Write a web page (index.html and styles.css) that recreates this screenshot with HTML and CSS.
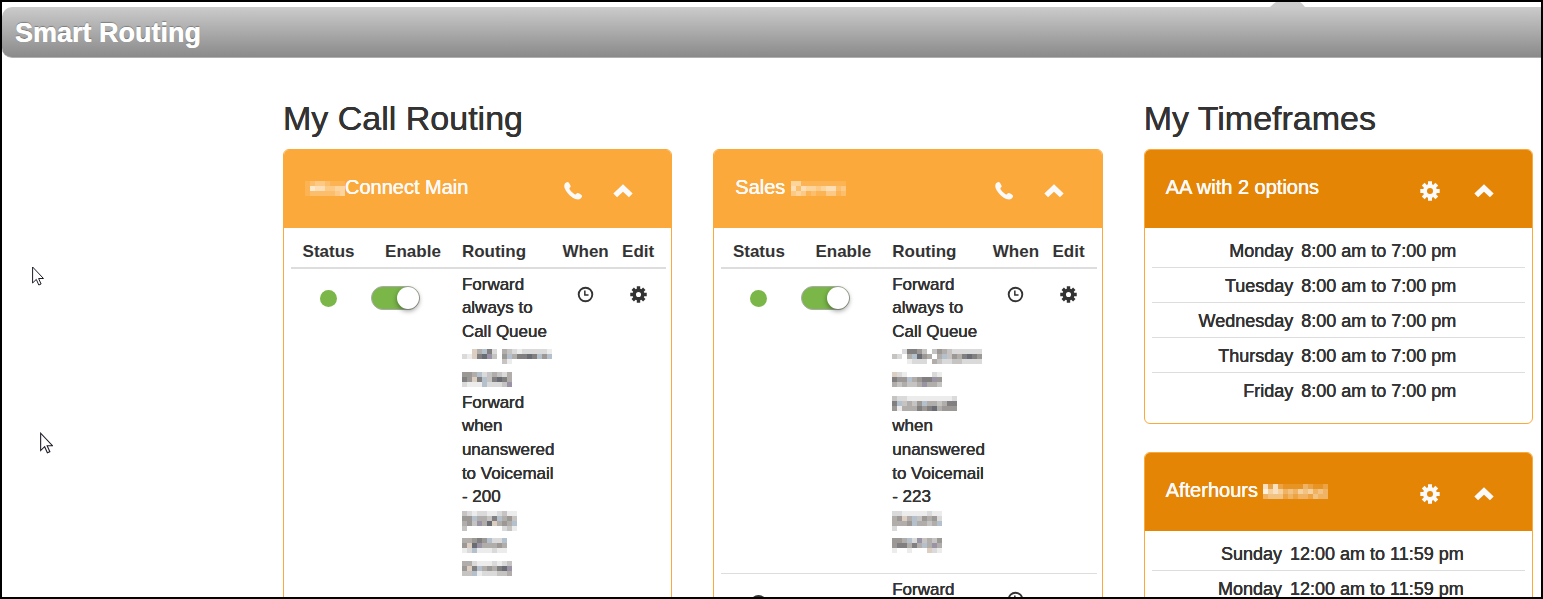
FILE: index.html
```html
<!DOCTYPE html>
<html lang="en">
<head>
<meta charset="utf-8">
<title>Smart Routing</title>
<link rel="stylesheet" href="styles.css">
</head>
<body>
<svg class="defs" aria-hidden="true">
  <symbol id="i-gear" viewBox="0 0 20 20">
    <circle cx="10" cy="10" r="5" fill="none" stroke="currentColor" stroke-width="4"/>
    <g stroke="currentColor" stroke-width="4">
      <path d="M10 .3V4M10 16v3.7M.3 10H4M16 10h3.7M3.2 3.2l2.6 2.6M14.2 14.2l2.6 2.6M3.2 16.800l2.600-2.600M14.200 5.800l2.600-2.600"/>
    </g>
  </symbol>
  <symbol id="i-up" viewBox="0 0 20 20">
    <path d="M2.200 14.400 10 7l7.800 7.400" fill="none" stroke="currentColor" stroke-width="5.400"/>
  </symbol>
  <symbol id="i-phone" viewBox="0 0 20 20">
    <path d="M1.600 3.200C2 2 3.800.9 5 1.100c.8.200 2.800 3.500 2.700 4.500-.1.800-1.500 1.400-1.300 2.100.5 1.700 4 5.200 5.900 5.700.8.200 1.300-1.300 2.200-1.400 1 0 4.400 1.800 4.600 2.800.2 1.100-1.300 3.100-2.700 3.500-1.700.5-5-.4-7-1.800C5.900 13.900 2.700 10.200 1.600 6.900c-.4-1.200-.4-2.700 0-3.700z" fill="currentColor"/>
  </symbol>
  <symbol id="i-clock" viewBox="0 0 18 18">
    <circle cx="9" cy="9" r="7.200" fill="none" stroke="currentColor" stroke-width="2"/>
    <path d="M8.300 4.800v4.800h3.900" fill="none" stroke="currentColor" stroke-width="1.600"/>
  </symbol>
  <symbol id="i-cursor" viewBox="0 0 12 20">
    <path d="M.6 1v16l3.700-3.600 2.500 5.600 2.300-1-2.500-5.500h4.900z" fill="#fff" stroke="#1c1c28" stroke-width="1"/>
  </symbol>
</svg>
<div class="frame">
  <div class="tab-strip">
    <svg class="tab" viewBox="0 0 35 5" aria-hidden="true"><path d="M0 5Q3 2 6 0h24q3 2 5 5z" fill="#ccc"/></svg>
  </div>
  <header class="titlebar"><h1>Smart Routing</h1></header>

  <main class="columns">
    <section class="routing">
      <h2>My Call Routing</h2>
      <div class="pair">
        <article class="panel">
          <div class="panel-head">
            <h3><span class="mosaic light" data-cells="12332111/16553344/12222234"></span>Connect Main</h3>
            <div class="tools">
              <button type="button" aria-label="Call"><svg><use href="#i-phone"/></svg></button>
              <button type="button" aria-label="Collapse"><svg><use href="#i-up"/></svg></button>
            </div>
          </div>
          <div class="panel-body">
            <table class="rules">
              <thead><tr><th class="c-status">Status</th><th class="c-enable">Enable</th><th class="c-routing">Routing</th><th class="c-when">When</th><th class="c-edit">Edit</th></tr></thead>
              <tbody>
                <tr>
                  <td><span class="dot"></span></td>
                  <td><input class="switch" type="checkbox" checked aria-label="Enable rule"></td>
                  <td class="text">Forward<br>always to<br>Call Queue<br><span class="mosaic" data-cells="..t4b62.4321222221/21t67p3.5b46676b5b/........31........"></span><br><span class="mosaic" data-cells="554b234324/65t6b36764/2111b2223p"></span><br>Forward<br>when<br>unanswered<br>to Voicemail<br>- 200<br><span class="mosaic" data-cells="32122112311/55b4436b453/453p47t454b/3.......231"></span><br><span class="mosaic" data-cells="44565b22b/5t7p44454/12b111211"></span><br><span class="mosaic" data-cells="4421112123/5t6b45467p/33b1222334"></span></td>
                  <td><button type="button" class="mini" aria-label="When"><svg><use href="#i-clock"/></svg></button></td>
                  <td><button type="button" class="mini" aria-label="Edit"><svg><use href="#i-gear"/></svg></button></td>
                </tr>
              </tbody>
            </table>
          </div>
        </article>

        <article class="panel">
          <div class="panel-head">
            <h3>Sales <span class="mosaic light" data-cells="44111111111/52544345523/34312113312"></span></h3>
            <div class="tools">
              <button type="button" aria-label="Call"><svg><use href="#i-phone"/></svg></button>
              <button type="button" aria-label="Collapse"><svg><use href="#i-up"/></svg></button>
            </div>
          </div>
          <div class="panel-body">
            <table class="rules">
              <thead><tr><th class="c-status">Status</th><th class="c-enable">Enable</th><th class="c-routing">Routing</th><th class="c-when">When</th><th class="c-edit">Edit</th></tr></thead>
              <tbody>
                <tr>
                  <td><span class="dot"></span></td>
                  <td><input class="switch" type="checkbox" checked aria-label="Enable rule"></td>
                  <td class="text">Forward<br>always to<br>Call Queue<br><span class="mosaic" data-cells="..26653.3543222222/32.4b754.4b35467655/...1222.4322332222"></span><br><span class="mosaic" data-cells="t21.....21/655b4566p5/434334p443"></span><br><span class="mosaic" data-cells="3221111111112/6b3435b443466/5144465674555"></span><br>when<br>unanswered<br>to Voicemail<br>- 223<br><span class="mosaic" data-cells="2211111211/45t4b35452/4445b4434b/2........."></span><br><span class="mosaic" data-cells="554b2p3435/566464b4p4/1..1...t21"></span></td>
                  <td><button type="button" class="mini" aria-label="When"><svg><use href="#i-clock"/></svg></button></td>
                  <td><button type="button" class="mini" aria-label="Edit"><svg><use href="#i-gear"/></svg></button></td>
                </tr>
                <tr>
                  <td><span class="dot off"></span></td>
                  <td></td>
                  <td class="text">Forward</td>
                  <td><button type="button" class="mini" aria-label="When"><svg><use href="#i-clock"/></svg></button></td>
                  <td></td>
                </tr>
              </tbody>
            </table>
          </div>
        </article>
      </div>
    </section>

    <section class="timeframes">
      <h2>My Timeframes</h2>
      <article class="panel deep">
        <div class="panel-head">
          <h3>AA with 2 options</h3>
          <div class="tools">
            <button type="button" aria-label="Settings"><svg><use href="#i-gear"/></svg></button>
            <button type="button" aria-label="Collapse"><svg><use href="#i-up"/></svg></button>
          </div>
        </div>
        <div class="panel-body">
          <table class="hours">
            <tbody>
              <tr><th scope="row">Monday</th><td>8:00 am to 7:00 pm</td></tr>
              <tr><th scope="row">Tuesday</th><td>8:00 am to 7:00 pm</td></tr>
              <tr><th scope="row">Wednesday</th><td>8:00 am to 7:00 pm</td></tr>
              <tr><th scope="row">Thursday</th><td>8:00 am to 7:00 pm</td></tr>
              <tr><th scope="row">Friday</th><td>8:00 am to 7:00 pm</td></tr>
            </tbody>
          </table>
        </div>
      </article>
      <article class="panel deep">
        <div class="panel-head">
          <h3>Afterhours <span class="mosaic light" data-cells="6262111132112/7565343545343/3444232332433"></span></h3>
          <div class="tools">
            <button type="button" aria-label="Settings"><svg><use href="#i-gear"/></svg></button>
            <button type="button" aria-label="Collapse"><svg><use href="#i-up"/></svg></button>
          </div>
        </div>
        <div class="panel-body">
          <table class="hours long">
            <tbody>
              <tr><th scope="row">Sunday</th><td>12:00 am to 11:59 pm</td></tr>
              <tr><th scope="row">Monday</th><td>12:00 am to 11:59 pm</td></tr>
            </tbody>
          </table>
        </div>
      </article>
    </section>
  </main>

  <svg class="cursor first" aria-hidden="true"><use href="#i-cursor"/></svg>
  <svg class="cursor second" aria-hidden="true"><use href="#i-cursor"/></svg>
</div>
<script src="mosaic.js"></script>
</body>
</html>
```
FILE: styles.css
```css
* { box-sizing: border-box; }
body {
  margin: 0;
  font-family: "Liberation Sans", Arial, sans-serif;
  font-size: 17px;
  line-height: 1.39;
  color: #333;
  background: #fff;
}
.defs { position: absolute; width: 0; height: 0; }
.frame {
  position: relative;
  height: 100vh;
  overflow: hidden;
  border: 2px solid #000;
}
h1, h2, h3 { margin: 0; }

.tab-strip { display: flex; justify-content: flex-end; height: 5px; padding-right: 236px; }
.tab { width: 35px; height: 5px; }
.titlebar {
  padding: 7px 13px 5px;
  border-bottom: 1px solid #b0b0b0;
  border-radius: 10px 0 0 10px;
  background: linear-gradient(#cbcbcb, #8a8a8a);
}
h1 {
  font-size: 27px;
  line-height: 38px;
  color: #fff;
  text-shadow: 0 0 0 #fff, 0 -1px 1px rgba(0, 0, 0, .3);
}

.columns {
  display: grid;
  grid-template-columns: repeat(3, minmax(0, 1fr));
  column-gap: 41px;
  padding: 40px 8px 0 281px;
}
.routing { grid-column: span 2; }
.pair { display: grid; grid-template-columns: 1fr 1fr; gap: 41px; align-items: start; }
h2 {
  padding-bottom: 11px;
  font-size: 34px;
  font-weight: 400;
  line-height: 40px;
  text-shadow: 0 0 0 #333, 0 0 0 #333;
}

.panel { border: 1px solid #fca93b; border-radius: 6px; overflow: hidden; }
.panel + .panel { margin-top: 28px; }
.pair .panel + .panel { margin-top: 0; }
.pair .panel { min-height: 480px; }
.panel-head {
  display: flex;
  align-items: flex-end;
  justify-content: space-between;
  padding: 25px 38px 27px 21px;
  background: #fca93b;
  color: #fafafa;
}
.deep .panel-head { background: #e58505; }
h3 {
  padding-bottom: 2px;
  font-size: 20px;
  font-weight: 400;
  line-height: 24px;
  white-space: nowrap;
  text-shadow: 0 0 0 #fafafa, 0 0 0 #fafafa;
}
.tools { display: flex; gap: 30px; }
.deep .tools { gap: 34px; }
button { display: block; padding: 0; border: 0; background: none; color: inherit; cursor: pointer; }
button svg { display: block; width: 20px; height: 20px; }

.panel-body { padding: 5px 5px 16px 7px; }
.deep .panel-body { padding: 5px 7px 16px 7px; }
table { width: 100%; border-collapse: collapse; }
.rules { table-layout: fixed; }
.rules th {
  padding: 7px 0 3px;
  border-bottom: 2px solid #ddd;
  font-weight: 700;
  text-align: center;
}
.rules .c-status { width: 20%; }
.rules .c-enable { width: 25%; }
.rules .c-routing { width: 27%; padding-left: 2px; text-align: left; }
.rules .c-when { width: 13%; }
.rules .c-edit { width: 15%; }
.rules td { padding: 4px 0 17px; vertical-align: top; }
.rules tr + tr td { border-top: 1px solid #ddd; }
.rules td.text { padding-left: 2px; white-space: nowrap; text-shadow: 0 0 0 #333, 0 0 0 #333; }
.dot {
  display: block;
  width: 17px;
  height: 17px;
  margin: 17px auto 0;
  border-radius: 50%;
  background: #7ab648;
}
.dot.off { border: 2px solid #333; background: none; }
.switch {
  appearance: none;
  display: block;
  width: 49px;
  height: 24px;
  margin: 13px 0 0 5px;
  border: 1px solid #aaa;
  border-radius: 12px;
  background: #7ab648;
}
.switch::before {
  content: "";
  display: block;
  width: 22px;
  height: 22px;
  margin-left: auto;
  border-radius: 50%;
  background: #fff;
  box-shadow: 0 2px 5px rgba(0, 0, 0, .4);
}
.mini { margin: 13px auto 0; }
.mini svg { width: 17px; height: 17px; }

.hours { font-size: 18px; line-height: 24px; text-shadow: 0 0 0 #333, 0 0 0 #333; }
.hours th, .hours td { padding: 6px 4px 4px; }
.hours th { width: 39%; font-weight: 400; text-align: right; }
.hours.long th { width: 36%; }
.hours tr + tr > * { border-top: 1px solid #ddd; }

.mosaic { display: inline-block; vertical-align: middle; }
.mosaic svg { display: block; }

.cursor { position: absolute; width: 12px; height: 20px; }
.cursor.first { left: 30px; top: 264px; }
.cursor.second { left: 38px; top: 430px; width: 13px; height: 22px; }
```
FILE: mosaic.js
```js
// Draws the pixelated blocks that hide private names and numbers.
const CELL = 5;
const GREYS = {
  1: '#ececec', 2: '#dadada', 3: '#c6c4c2', 4: '#b0adab', 5: '#9b9896',
  6: '#827f80', 7: '#6a6c74', b: '#b4c0cc', p: '#9a93a6', t: '#dccfc2'
};
document.querySelectorAll('.mosaic').forEach((el) => {
  const rows = el.dataset.cells.split('/');
  const light = el.classList.contains('light');
  const width = rows[0].length * CELL;
  const height = rows.length * CELL;
  let rects = '';
  rows.forEach((row, y) => {
    [...row].forEach((key, x) => {
      if (key === '.') return;
      const fill = light ? `rgba(255,255,255,${key / 8})` : GREYS[key];
      rects += `<rect x="${x * CELL}" y="${y * CELL}" width="${CELL}" height="${CELL}" fill="${fill}"/>`;
    });
  });
  el.innerHTML = `<svg role="img" aria-label="Hidden" width="${width}" height="${height}" shape-rendering="crispEdges">${rects}</svg>`;
});
```
